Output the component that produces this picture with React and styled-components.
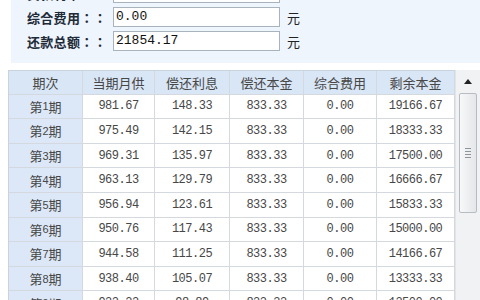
import styled, { createGlobalStyle } from 'styled-components';

const Global = createGlobalStyle`
  html, body {
    margin: 0;
    padding: 0;
    background: #ffffff;
    overflow: hidden;
  }
  body {
    font-family: "Liberation Sans", "Noto Sans CJK SC", sans-serif;
  }
`;

const Page = styled.div`
  width: 480px;
  height: 300px;
  overflow: hidden;
`;

const Panel = styled.div`
  margin-left: 11px;
  height: 63px;
  background: #eef5fd;
  display: flex;
  flex-direction: column;
  gap: 4px;
  padding-left: 16px;
  overflow: hidden;
`;

const FormRow = styled.div`
  display: flex;
  align-items: center;
  height: 20px;
  flex-shrink: 0;
  &:first-child {
    margin-top: -17px;
  }
`;

const Label = styled.span`
  width: 86px;
  font-size: 13px;
  font-weight: 700;
  color: #1e2a38;
  font-family: "Noto Sans CJK JP", "Noto Sans CJK SC", sans-serif;
  letter-spacing: 0.3px;
  white-space: nowrap;
`;

const Input = styled.div`
  box-sizing: border-box;
  width: 167px;
  height: 20px;
  border: 1px solid #a9b3bd;
  background: #fff;
  font-family: "Liberation Mono", "Noto Sans CJK SC", monospace;
  font-size: 13px;
  line-height: 18px;
  padding-left: 2px;
  color: #111;
`;

const Unit = styled.span`
  margin-left: 7px;
  font-size: 13px;
  color: #222;
  font-family: "Noto Sans CJK SC", sans-serif;
`;

const TableWrap = styled.div`
  margin-top: 7px;
  margin-left: 8px;
  display: flex;
`;

const Table = styled.div`
  width: 447px;
  border-left: 1px solid #c9d3de;
`;

const Row = styled.div`
  display: grid;
  grid-template-columns: 74px 72px 75px 74px 73px 78px;
  height: 24.6px;
  box-sizing: border-box;
  border-bottom: 1px solid #d4d9df;
  background: ${({ $head }) => ($head ? '#d9e6f6' : '#ffffff')};
  &:first-child {
    border-top: 1px solid #c9d3de;
  }
`;

const Cell = styled.div`
  display: flex;
  align-items: center;
  justify-content: center;
  border-right: 1px solid #d4d9df;
  font-size: ${({ $num }) => ($num ? '12px' : '13px')};
  color: #474747;
  font-family: ${({ $num }) =>
    $num ? '"Liberation Mono", monospace' : '"Noto Sans CJK SC", sans-serif'};
  background: ${({ $side }) => ($side ? '#dce8f7' : 'transparent')};
  white-space: nowrap;
  letter-spacing: ${({ $num }) => ($num ? '-0.5px' : '0')};
`;

const Small = styled.span`
  font-size: 11px;
  font-family: "Liberation Sans", sans-serif;
`;

const Scrollbar = styled.div`
  width: 25px;
  height: 240px;
  background: #f1f2f3;
  border-left: 1px solid #e2e5e8;
  display: flex;
  flex-direction: column;
  align-items: center;
`;

const Arrow = styled.div`
  height: 22px;
  display: flex;
  align-items: center;
  justify-content: center;
`;

const Thumb = styled.div`
  width: 16px;
  height: 118px;
  margin-top: 1px;
  border: 1px solid #b7bcc2;
  border-radius: 2px;
  background: linear-gradient(to right, #f7f8f9, #e4e6e9);
  display: flex;
  align-items: center;
  justify-content: center;
`;

const Grip = styled.div`
  width: 6px;
  display: flex;
  flex-direction: column;
  gap: 2px;
  span {
    height: 1px;
    background: #8d949b;
  }
`;

const heads = ['期次', '当期月供', '偿还利息', '偿还本金', '综合费用', '剩余本金'];

const rows = [
  ['981.67', '148.33', '19166.67'],
  ['975.49', '142.15', '18333.33'],
  ['969.31', '135.97', '17500.00'],
  ['963.13', '129.79', '16666.67'],
  ['956.94', '123.61', '15833.33'],
  ['950.76', '117.43', '15000.00'],
  ['944.58', '111.25', '14166.67'],
  ['938.40', '105.07', '13333.33'],
  ['932.22', '98.89', '12500.00'],
];

export default function App() {
  return (
    <Page>
      <Global />
      <Panel>
        <FormRow>
          <Label>贷款利率：：</Label>
          <Input>6.15</Input>
          <Unit>%</Unit>
        </FormRow>
        <FormRow>
          <Label>综合费用：：</Label>
          <Input>0.00</Input>
          <Unit>元</Unit>
        </FormRow>
        <FormRow>
          <Label>还款总额：：</Label>
          <Input>21854.17</Input>
          <Unit>元</Unit>
        </FormRow>
      </Panel>
      <TableWrap>
        <Table>
          <Row $head>
            {heads.map((h) => (
              <Cell key={h}>{h}</Cell>
            ))}
          </Row>
          {rows.map((r, i) => (
            <Row key={i}>
              <Cell $side>
                第<Small>{i + 1}</Small>期
              </Cell>
              <Cell $num>{r[0]}</Cell>
              <Cell $num>{r[1]}</Cell>
              <Cell $num>833.33</Cell>
              <Cell $num>0.00</Cell>
              <Cell $num>{r[2]}</Cell>
            </Row>
          ))}
        </Table>
        <Scrollbar>
          <Arrow>
            <svg width="8" height="5" viewBox="0 0 8 5">
              <path d="M0 5 L4 0 L8 5 Z" fill="#222" />
            </svg>
          </Arrow>
          <Thumb>
            <Grip>
              <span />
              <span />
              <span />
              <span />
            </Grip>
          </Thumb>
        </Scrollbar>
      </TableWrap>
    </Page>
  );
}
